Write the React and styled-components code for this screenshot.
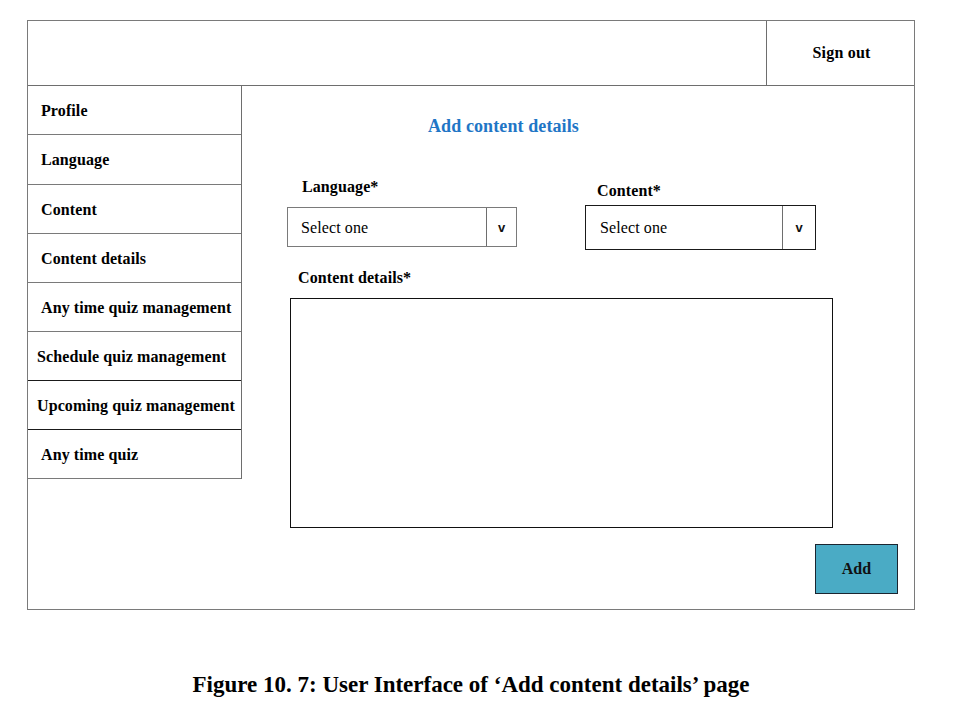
import React from "react";
import styled, { createGlobalStyle } from "styled-components";

const Global = createGlobalStyle`
  html, body { margin: 0; padding: 0; background: #ffffff; }
  body { font-family: "Liberation Serif", "Times New Roman", serif; color: #000; }
`;

const Page = styled.div`
  width: 888px;
  margin-left: 27px;
  padding-top: 20px;
`;

const Frame = styled.div`
  box-sizing: border-box;
  width: 888px;
  height: 590px;
  border: 1px solid #7a7a7a;
  display: flex;
  flex-direction: column;
`;

const Header = styled.header`
  height: 64px;
  border-bottom: 1px solid #6e6e6e;
  display: flex;
`;

const HeaderSpacer = styled.div`
  flex: 1;
`;

const SignOut = styled.div`
  width: 148px;
  border-left: 1px solid #6e6e6e;
  display: flex;
  align-items: center;
  justify-content: center;
  font-weight: bold;
  font-size: 16px;
  letter-spacing: 0.2px;
  padding-left: 2px;
  box-sizing: border-box;
`;

const Body = styled.div`
  flex: 1;
  display: flex;
  align-items: flex-start;
`;

const Sidebar = styled.nav`
  width: 213px;
  border-right: 1px solid #6e6e6e;
  display: flex;
  flex-direction: column;
`;

const NavItem = styled.div`
  box-sizing: border-box;
  height: ${(p) => p.$h}px;
  border-bottom: 1px solid ${(p) => (p.$dark ? "#1a1a1a" : "#7a7a7a")};
  display: flex;
  align-items: center;
  padding-left: ${(p) => p.$indent}px;
  padding-top: 1px;
  font-weight: bold;
  font-size: 16px;
  letter-spacing: 0.1px;
  white-space: nowrap;
`;

const Main = styled.main`
  flex: 1;
  display: flex;
  flex-direction: column;
  padding-left: 45px;
`;

const Title = styled.h2`
  margin: 30px 0 0 141px;
  font-size: 18px;
  line-height: 20px;
  font-weight: bold;
  letter-spacing: 0.1px;
  color: #1f76c6;
`;

const FieldRow = styled.div`
  display: flex;
  align-items: flex-start;
  margin-top: 43px;
  gap: 68px;
`;

const Field = styled.div`
  display: flex;
  flex-direction: column;
  margin-top: ${(p) => p.$top || 0}px;
`;

const Label = styled.label`
  font-weight: bold;
  font-size: 16px;
  letter-spacing: 0.1px;
  line-height: 16px;
  padding-left: ${(p) => p.$indent}px;
  margin-bottom: ${(p) => p.$gap}px;
`;

const Select = styled.div`
  box-sizing: border-box;
  width: ${(p) => p.$w}px;
  height: ${(p) => p.$h}px;
  border: 1px solid ${(p) => p.$border};
  display: flex;
  align-items: stretch;
`;

const SelectText = styled.div`
  flex: 1;
  display: flex;
  align-items: center;
  padding-left: ${(p) => p.$indent}px;
  padding-top: 1px;
  font-size: 16px;
  letter-spacing: 0.1px;
`;

const Arrow = styled.div`
  width: ${(p) => p.$w}px;
  border-left: 1px solid #6e6e6e;
  display: flex;
  align-items: center;
  justify-content: center;
  font-family: "Liberation Sans", Arial, sans-serif;
  font-weight: bold;
  font-size: 13px;
  color: #111;
`;

const DetailsLabel = styled(Label)`
  margin-top: 20px;
`;

const TextArea = styled.div`
  box-sizing: border-box;
  margin-left: 3px;
  width: 543px;
  height: 230px;
  border: 1px solid #111;
`;

const Actions = styled.div`
  display: flex;
  justify-content: flex-end;
  margin-top: 16px;
  padding-right: 16px;
`;

const AddButton = styled.button`
  box-sizing: border-box;
  width: 83px;
  height: 50px;
  background: #4aabc5;
  border: 1px solid #1b2530;
  font-family: "Liberation Serif", "Times New Roman", serif;
  font-weight: bold;
  font-size: 16px;
  color: #111;
  padding: 0;
`;

const Caption = styled.p`
  margin: 62px 0 0 0;
  text-align: center;
  font-weight: bold;
  font-size: 23px;
  line-height: 26px;
`;

const navItems = [
  { label: "Profile", h: 49, indent: 13 },
  { label: "Language", h: 50, indent: 13 },
  { label: "Content", h: 49, indent: 13 },
  { label: "Content details", h: 49, indent: 13 },
  { label: "Any time quiz management", h: 49, indent: 13 },
  { label: "Schedule quiz management", h: 49, indent: 9, dark: true },
  { label: "Upcoming quiz management", h: 49, indent: 9, dark: true },
  { label: "Any time quiz", h: 49, indent: 13 },
];

export default function App() {
  return (
    <>
      <Global />
      <Page>
        <Frame>
          <Header>
            <HeaderSpacer />
            <SignOut>Sign out</SignOut>
          </Header>
          <Body>
            <Sidebar>
              {navItems.map((it) => (
                <NavItem key={it.label} $h={it.h} $indent={it.indent} $dark={it.dark}>
                  {it.label}
                </NavItem>
              ))}
            </Sidebar>
            <Main>
              <Title>Add content details</Title>
              <FieldRow>
                <Field>
                  <Label $indent={15} $gap={12}>Language*</Label>
                  <Select $w={230} $h={40} $border="#7a7a7a">
                    <SelectText $indent={13}>Select one</SelectText>
                    <Arrow $w={29}>v</Arrow>
                  </Select>
                </Field>
                <Field $top={4}>
                  <Label $indent={12} $gap={6}>Content*</Label>
                  <Select $w={231} $h={45} $border="#1a1a1a">
                    <SelectText $indent={14}>Select one</SelectText>
                    <Arrow $w={32}>v</Arrow>
                  </Select>
                </Field>
              </FieldRow>
              <DetailsLabel $indent={11} $gap={12}>Content details*</DetailsLabel>
              <TextArea />
              <Actions>
                <AddButton>Add</AddButton>
              </Actions>
            </Main>
          </Body>
        </Frame>
        <Caption>Figure 10. 7: User Interface of ‘Add content details’ page</Caption>
      </Page>
    </>
  );
}
